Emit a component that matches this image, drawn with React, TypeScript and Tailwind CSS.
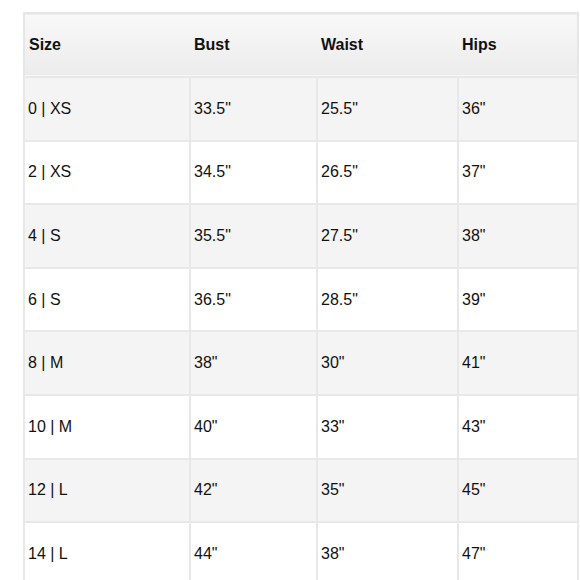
const rows = [
  ["0 | XS", "33.5\"", "25.5\"", "36\""],
  ["2 | XS", "34.5\"", "26.5\"", "37\""],
  ["4 | S", "35.5\"", "27.5\"", "38\""],
  ["6 | S", "36.5\"", "28.5\"", "39\""],
  ["8 | M", "38\"", "30\"", "41\""],
  ["10 | M", "40\"", "33\"", "43\""],
  ["12 | L", "42\"", "35\"", "45\""],
  ["14 | L", "44\"", "38\"", "47\""],
];

export default function App() {
  return (
    <div className="h-[580px] w-[580px] overflow-hidden bg-white pl-[23px] pt-[12px] font-['Liberation_Sans',Arial,sans-serif] text-[16px] text-[#111]">
      <table className="w-[554px] table-fixed border-collapse">
        <colgroup>
          <col className="w-[166px]" />
          <col className="w-[127px]" />
          <col className="w-[141px]" />
          <col className="w-[120px]" />
        </colgroup>
        <thead>
          <tr className="h-[64px] border-2 border-[#e6e6e6] border-b-[#dcdcdc] bg-gradient-to-b from-[#f8f8f8] to-[#ececec]">
            {["Size", "Bust", "Waist", "Hips"].map((h) => (
              <th key={h} className="px-[4px] text-left font-bold">
                {h}
              </th>
            ))}
          </tr>
        </thead>
        <tbody>
          {rows.map((r, i) => (
            <tr key={r[0]} className={`h-[63.6px] ${i % 2 === 0 ? "bg-[#f4f4f4]" : "bg-white"}`}>
              {r.map((c, j) => (
                <td key={j} className="border-2 border-[#e8e8e8] px-[3px] align-middle">
                  {c}
                </td>
              ))}
            </tr>
          ))}
        </tbody>
      </table>
    </div>
  );
}
